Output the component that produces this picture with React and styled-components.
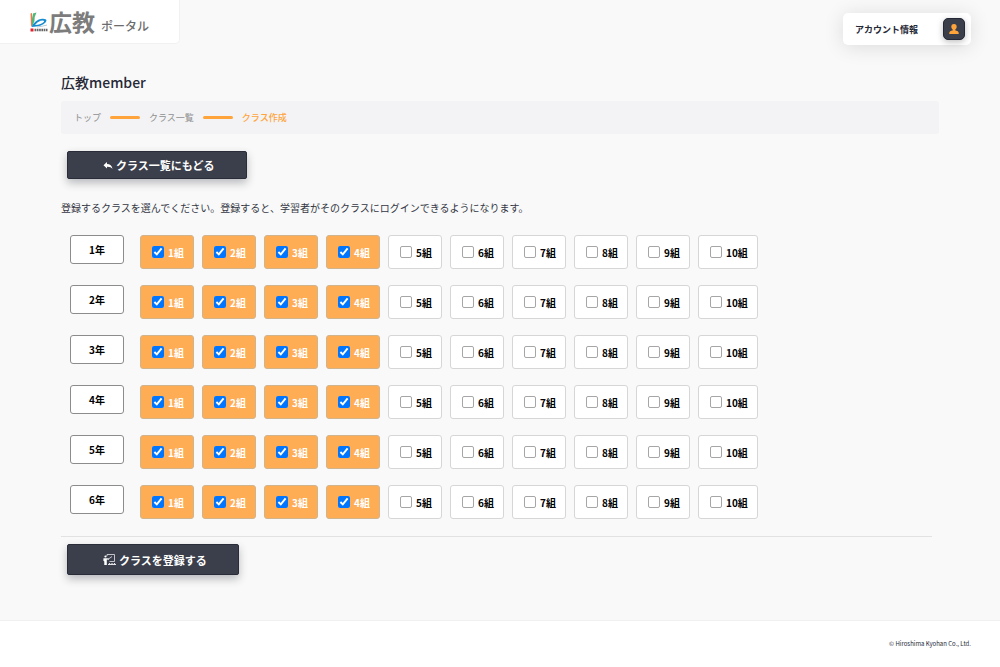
import React, { useState } from 'react';
import styled, { createGlobalStyle } from 'styled-components';

const GlobalStyle = createGlobalStyle`
  * {
    box-sizing: border-box;
  }

  body {
    margin: 0;
    background: #f9f9f9;
    color: #252836;
    font-family: 'Noto Sans CJK JP', 'Noto Sans', sans-serif;
  }

  button, input {
    font-family: inherit;
  }
`;

const Page = styled.div`
  display: flex;
  flex-direction: column;
  min-height: 100vh;
`;

const Header = styled.header`
  display: flex;
  justify-content: space-between;
  align-items: flex-start;
  padding-right: 29px;
`;

const Brand = styled.a`
  display: flex;
  align-items: center;
  width: 180px;
  height: 44px;
  padding: 0 0 2px 30px;
  background: #fff;
  border: 1px solid #f1f1f1;
  border-width: 0 1px 1px 0;
  border-radius: 0 0 5px 0;
  color: #7c7c7c;
  text-decoration: none;
`;

const BrandMark = styled.svg`
  width: 18px;
  height: 20px;
  margin-top: 2px;
`;

const BrandName = styled.span`
  margin-left: 1px;
  font-size: 23px;
  line-height: 40px;
  font-weight: 700;
`;

const BrandSub = styled.span`
  margin: 10px 0 0 6px;
  color: #6c6c6c;
  font-size: 12px;
  line-height: 20px;
  font-weight: 500;
`;

const Account = styled.button`
  display: flex;
  align-items: center;
  justify-content: space-between;
  width: 128px;
  height: 32px;
  margin-top: 13px;
  padding: 0 6px 0 12px;
  background: #fff;
  border: 0;
  border-radius: 5px;
  box-shadow: 0 2px 20px rgba(0, 0, 0, 0.12);
  color: #252836;
  font-size: 9px;
  font-weight: 700;
`;

const Avatar = styled.span`
  display: flex;
  align-items: center;
  justify-content: center;
  width: 22px;
  height: 22px;
  background: #3b3f4b;
  border: 1px solid #252836;
  border-radius: 5px;
  box-shadow: 0 2px 6px rgba(0, 0, 0, 0.25);
`;

const Main = styled.main`
  flex: 1;
  padding: 25px 61px 0;
`;

const Title = styled.h1`
  margin: 0;
  font-size: 14px;
  line-height: 24px;
  font-weight: 500;
`;

const Breadcrumb = styled.nav`
  display: flex;
  align-items: center;
  gap: 9px;
  height: 33px;
  margin-top: 7px;
  padding: 0 13px;
  background: #f3f3f5;
  border-radius: 3px;
  font-size: 9px;
`;

const Crumb = styled.a`
  color: ${props => (props.$current ? '#ffa43b' : '#8f8f8f')};
  font-weight: ${props => (props.$current ? 500 : 400)};
  text-decoration: none;
`;

const CrumbLine = styled.span`
  width: 30px;
  height: 3px;
  border-radius: 2px;
  background: #ffa43b;
`;

const DarkButton = styled.button`
  display: flex;
  align-items: center;
  justify-content: center;
  gap: 3px;
  height: ${props => (props.$large ? '31px' : '28px')};
  margin: ${props => (props.$large ? '7px' : '17px')} 6px 0;
  padding: 0 31px 0 35px;
  background: #3b3f4b;
  border: 1px solid #2a2d39;
  border-radius: 2px;
  box-shadow: 0 4px 8px rgba(37, 40, 54, 0.3);
  color: #fff;
  font-size: 11px;
  font-weight: 700;
`;

const Lead = styled.p`
  margin: 20px 0 18px;
  color: #333643;
  font-size: 10px;
  line-height: 18px;
`;

const ClassForm = styled.form`
  margin: 0;
`;

const GradeList = styled.div`
  display: flex;
  flex-direction: column;
  gap: 16px;
  margin-right: 7px;
  padding: 0 0 17px 9px;
  border-bottom: 1px solid #e2e2e4;
`;

const GradeRow = styled.div`
  display: flex;
  align-items: flex-start;
  gap: 16px;
`;

const GradeButton = styled.button`
  width: 54px;
  height: 29px;
  padding: 0;
  background: #fff;
  border: 1px solid #8c8c8c;
  border-radius: 3px;
  color: #000;
  font-size: 10px;
  font-weight: 700;
`;

const ClassList = styled.div`
  display: flex;
  flex-wrap: wrap;
  gap: 8px;
`;

const ClassLabel = styled.label`
  display: flex;
  align-items: center;
  gap: 4px;
  min-width: 54px;
  height: 34px;
  padding: 0 9px 0 11px;
  background: ${props => (props.$on ? '#ffad55' : '#fff')};
  border: 1px solid ${props => (props.$on ? '#d0b48e' : '#d6d6d6')};
  border-radius: 3px;
  color: ${props => (props.$on ? '#fff' : '#000')};
  font-size: 10px;
  font-weight: 700;
`;

const CheckInput = styled.input`
  flex: none;
  width: 12px;
  height: 12px;
  margin: 0;

  &:not(:checked) {
    appearance: none;
    background: #fff;
    border: 1px solid #a6a6a6;
    border-radius: 2px;
  }
`;

const CheckText = styled.span`
  padding-top: 1px;
  white-space: nowrap;
`;

const Footer = styled.footer`
  height: 47px;
  padding: 0 29px;
  background: #fff;
  border-top: 1px solid #f0f0f0;
  font-size: 6px;
  line-height: 46px;
  text-align: right;
`;

const BrandLogo = () => (
    <BrandMark viewBox="0 0 18 20" aria-hidden="true">
        <path d="M.5 1.500 L2 1 Q1.800 4 3 7 L3 12 L1 15z" fill="#ef7a4d" />
        <path d="M3 1.500 L6.500.5 Q4 5 4.500 9 L2 15 Q1.500 8 3 1.500z" fill="#4fb878" />
        <path d="M1.500 15 Q5 7.500 12 6.700 Q18.500 6.300 15.500 10.500 Q12 14.500 1.500 15z M5 13 Q11.500 12.500 14 9.700 Q14.500 7.800 10.500 8.800 Q7 10 5 13z" fill="#168bd0" fillRule="evenodd" />
        <path d="M7 15 Q12 14.500 17 13" stroke="#9fb4be" strokeWidth=".7" fill="none" />
        <path d="M.5 16.500h3v3H.5z" fill="#e3202c" />
        <path d="M4.500 18h13" stroke="#666" strokeWidth="2.500" strokeDasharray="1.700 .6" />
    </BrandMark>
);

const PersonIcon = () => (
    <svg width="10" height="10" viewBox="0 0 10 10" aria-hidden="true">
        <path d="M5 0C3.200 0 2.200 1.200 2.300 2.800C2.400 4.200 3 5 3.700 5.500v.8C3.200 7 .3 6.900.3 9V10h9.400V9C9.700 6.900 6.800 7 6.300 6.300V5.500c.7-.5 1.300-1.300 1.400-2.700C7.800 1.200 6.800 0 5 0z" fill="#ffa43b" />
    </svg>
);

const BackIcon = () => (
    <svg width="10" height="9" viewBox="0 0 10 9" aria-hidden="true">
        <path d="M4 1v2c3 0 5 1.500 5.500 5C8.300 6.300 6.800 5.600 4 5.700V7.500L.5 4.200z" fill="#fff" />
    </svg>
);

const RegisterIcon = () => (
    <svg width="13" height="13" viewBox="0 0 13 13" fill="none" stroke="#e4e5e8" strokeWidth=".8" aria-hidden="true">
        <path d="M4 3V1.500h7.500v7H6.500" />
        <path d="M5.500 6l3.500-2.500" />
        <circle cx="2.500" cy="3.500" r="1.100" fill="#fff" stroke="none" />
        <path d="M.5 5.200h3.200l2.300.3-.2 1.200-2-.1V12H1.300V8.500L.3 7.500z" fill="#fff" stroke="none" />
        <path d="M5 11.500h8M6.500 10v2M9 10v2M11.500 10v2" strokeWidth="1.200" />
    </svg>
);

const GRADES = [1, 2, 3, 4, 5, 6];
const CLASSES = [1, 2, 3, 4, 5, 6, 7, 8, 9, 10];

const ClassCheck = ({ grade, number }) => {
    const [checked, setChecked] = useState(number <= 4);
    const id = `class-${grade}-${number}`;

    return (
        <ClassLabel htmlFor={id} $on={checked}>
            <CheckInput
                id={id}
                type="checkbox"
                checked={checked}
                onChange={e => setChecked(e.target.checked)}
            />
            <CheckText>{number}組</CheckText>
        </ClassLabel>
    );
};

export default function App() {
    return (
        <Page>
            <GlobalStyle />
            <Header>
                <Brand href="#">
                    <BrandLogo />
                    <BrandName>広教</BrandName>
                    <BrandSub>ポータル</BrandSub>
                </Brand>
                <Account type="button">
                    アカウント情報
                    <Avatar><PersonIcon /></Avatar>
                </Account>
            </Header>
            <Main>
                <Title>広教member</Title>
                <Breadcrumb>
                    <Crumb href="#">トップ</Crumb>
                    <CrumbLine />
                    <Crumb href="#">クラス一覧</Crumb>
                    <CrumbLine />
                    <Crumb href="#" $current>クラス作成</Crumb>
                </Breadcrumb>
                <DarkButton type="button"><BackIcon />クラス一覧にもどる</DarkButton>
                <Lead>登録するクラスを選んでください。登録すると、学習者がそのクラスにログインできるようになります。</Lead>
                <ClassForm onSubmit={e => e.preventDefault()}>
                    <GradeList>
                        {GRADES.map(grade => (
                            <GradeRow key={grade}>
                                <GradeButton type="button">{grade}年</GradeButton>
                                <ClassList>
                                    {CLASSES.map(number => (
                                        <ClassCheck key={number} grade={grade} number={number} />
                                    ))}
                                </ClassList>
                            </GradeRow>
                        ))}
                    </GradeList>
                    <DarkButton type="submit" $large><RegisterIcon />クラスを登録する</DarkButton>
                </ClassForm>
            </Main>
            <Footer>© Hiroshima Kyohan Co., Ltd.</Footer>
        </Page>
    );
}
